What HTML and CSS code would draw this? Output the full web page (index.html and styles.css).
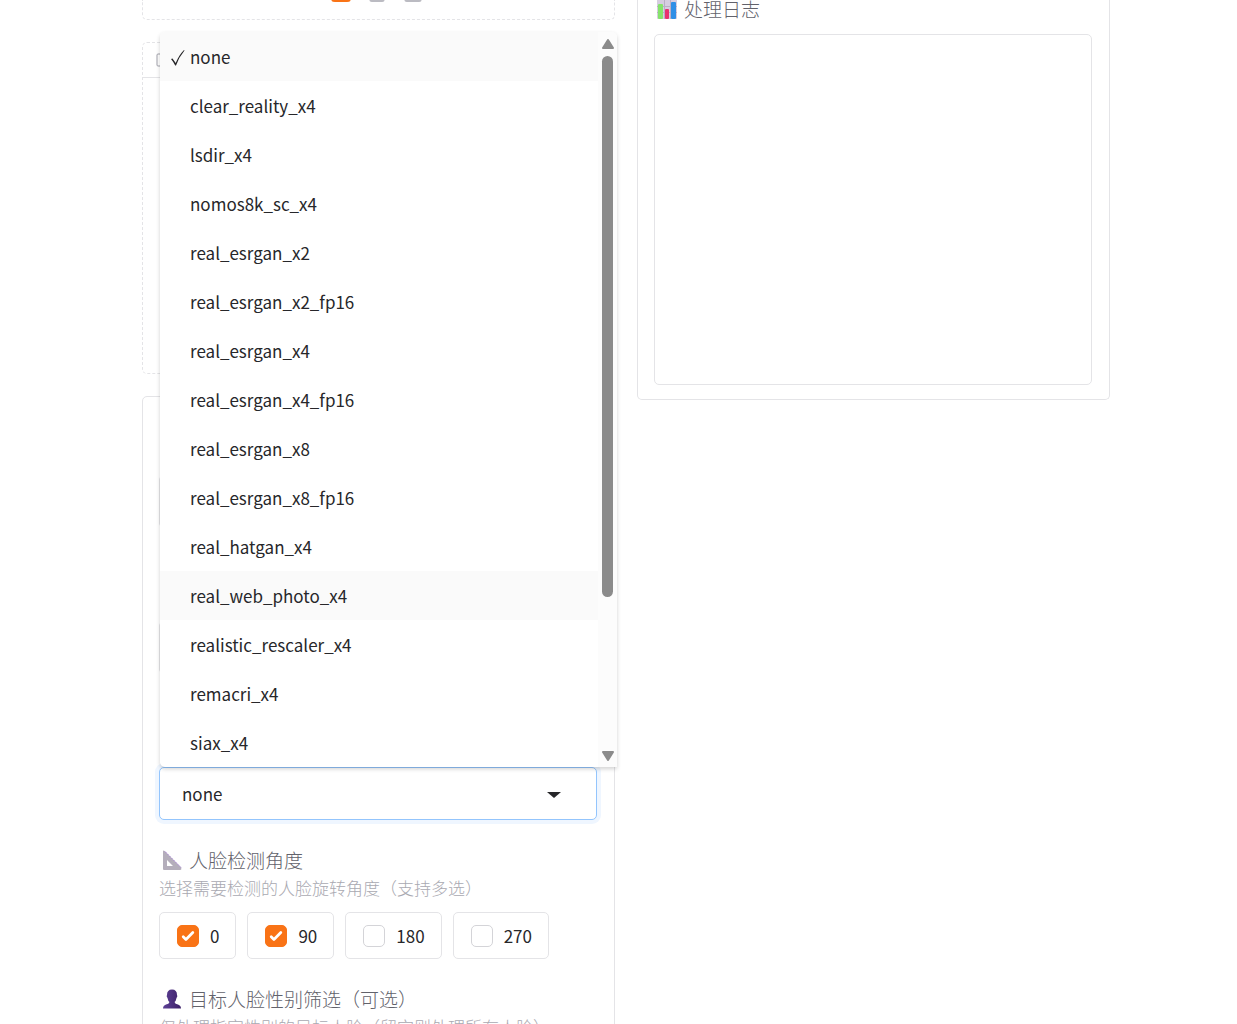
FILE: index.html
```
<!DOCTYPE html>
<html lang="zh-CN">
<head>
    <meta charset="UTF-8">
    <meta name="viewport" content="width=device-width, initial-scale=1.0">
    <title>人脸检测</title>
    <link rel="stylesheet" href="styles.css">
</head>
<body>
    <main class="container">
        <div class="column">
            <section class="upload">
                <svg class="source active" viewBox="0 0 20 2"><path d="M1 0Q2 1 4 1H16Q18 1 19 0"/></svg>
                <svg class="source" viewBox="0 0 20 2"><path d="M3 0Q4 1 5 1H15Q16 1 17 0"/></svg>
                <svg class="source" viewBox="0 0 20 2"><path d="M2 0Q3 1 4 1H16Q17 1 18 0"/></svg>
            </section>
            <section class="preview">
                <div class="preview-head">
                    <svg width="14" height="14" viewBox="0 0 14 14"><rect x="1" y="1" width="12" height="12" rx="1"/></svg>
                </div>
            </section>
            <section class="card options">
                <div class="field hidden-label">
                    <select class="dropdown" aria-label="模型"></select>
                </div>
                <div class="field hidden-label">
                    <select class="dropdown" aria-label="增强"></select>
                </div>
                <div class="field hidden-label">
                    <div class="dropdown-wrap">
                        <select class="dropdown focused" aria-label="超分">
                            <option>none</option>
                        </select>
                        <svg class="caret" viewBox="0 0 14 6"><path d="M0 0h14L7 6z"/></svg>
                        <div class="menu">
                            <ul class="menu-list" role="listbox">
                                <li class="item selected" role="option" aria-selected="true"><svg class="tick" viewBox="0 0 14 16"><path d="M0 9L1.500 8.500L4.700 13Q8 5 13 0L13.500 .5Q8 7 5 15.500H4.200Q2.500 12 0 9z"/></svg>none</li>
                                <li class="item" role="option">clear_reality_x4</li>
                                <li class="item" role="option">lsdir_x4</li>
                                <li class="item" role="option">nomos8k_sc_x4</li>
                                <li class="item" role="option">real_esrgan_x2</li>
                                <li class="item" role="option">real_esrgan_x2_fp16</li>
                                <li class="item" role="option">real_esrgan_x4</li>
                                <li class="item" role="option">real_esrgan_x4_fp16</li>
                                <li class="item" role="option">real_esrgan_x8</li>
                                <li class="item" role="option">real_esrgan_x8_fp16</li>
                                <li class="item" role="option">real_hatgan_x4</li>
                                <li class="item hover" role="option">real_web_photo_x4</li>
                                <li class="item" role="option">realistic_rescaler_x4</li>
                                <li class="item" role="option">remacri_x4</li>
                                <li class="item" role="option">siax_x4</li>
                            </ul>
                            <div class="scrollbar">
                                <svg class="arrow" viewBox="0 0 14 10"><path d="M7 1L12 9H2z"/></svg>
                                <div class="track"><div class="thumb"></div></div>
                                <svg class="arrow" viewBox="0 0 14 10"><path d="M7 9L2 1H12z"/></svg>
                            </div>
                        </div>
                    </div>
                </div>
                <div class="field">
                    <h2 class="title">
                        <svg class="icon" viewBox="0 0 20 20">
                            <path fill="#b4aebb" fill-rule="evenodd" d="M1 1.500Q1 0 2.500 1L19 17.500Q20 20 18 20H2Q1 20 1 19zM5 10V16H11z"/>
                            <path fill="none" stroke="#a682d0" stroke-dasharray="2 1" d="M3 1.500L19 17.500"/>
                        </svg>
                        人脸检测角度
                    </h2>
                    <p class="info">选择需要检测的人脸旋转角度（支持多选）</p>
                    <div class="choices">
                        <label class="choice"><input type="checkbox" checked>0</label>
                        <label class="choice"><input type="checkbox" checked>90</label>
                        <label class="choice"><input type="checkbox">180</label>
                        <label class="choice"><input type="checkbox">270</label>
                    </div>
                </div>
                <div class="field">
                    <h2 class="title">
                        <svg class="icon" viewBox="0 0 20 20">
                            <defs>
                                <linearGradient id="bust" x2="1">
                                    <stop offset="0" stop-color="#5d4196"/>
                                    <stop offset="1" stop-color="#3d2068"/>
                                </linearGradient>
                            </defs>
                            <path fill="url(#bust)" d="M10 .5Q15 .5 15 6Q16 7 14.500 9Q14 12 12.500 13Q13 15 16 15.500Q19 16.500 19 19.500H1Q1 16.500 4 15.500Q7 15 7.500 13Q6 12 5.500 9Q4 7 5 6Q5 .5 10 .5z"/>
                        </svg>
                        目标人脸性别筛选（可选）
                    </h2>
                    <p class="info">仅处理指定性别的目标人脸（留空则处理所有人脸）</p>
                </div>
            </section>
        </div>
        <div class="column">
            <section class="card log">
                <label class="title" for="log">
                    <svg class="icon" viewBox="0 0 20 20">
                        <rect width="20" height="20" rx="1" fill="#d6cde0"/>
                        <path stroke="#b9aec6" fill="none" d="M0 7.500H20M0 13.500H20M7.500 0V20M13.500 0V20"/>
                        <rect x="1" y="5" width="5" height="15" rx="1" fill="#86e36c"/>
                        <rect x="8" y="10" width="4" height="10" rx="1" fill="#e8316f"/>
                        <rect x="14" y="3" width="5" height="17" rx="1" fill="#2f8fe6"/>
                    </svg>
                    处理日志
                </label>
                <textarea id="log" readonly></textarea>
            </section>
        </div>
    </main>
</body>
</html>
```
FILE: styles.css
```
* {
    box-sizing: border-box;
}

body {
    margin: 0;
    height: 100vh;
    overflow: hidden;
    background: #fff;
    color: #27272a;
    font-family: 'Noto Sans CJK SC', sans-serif;
    font-size: 17px;
}

.container {
    display: grid;
    grid-template-columns: 1fr 1fr;
    align-items: start;
    gap: 22px;
    padding: 0 127px 0 142px;
}

.column {
    display: flex;
    flex-direction: column;
    gap: 22px;
    min-width: 0;
}

.upload {
    display: flex;
    justify-content: center;
    gap: 16px;
    height: 20px;
    padding-right: 3px;
    border: 1px dashed #e4e4e7;
    border-top: none;
    border-radius: 0 0 5px 5px;
}

.source {
    width: 20px;
    height: 2px;
    fill: none;
    stroke: #bbbbc2;
    stroke-width: 2;
}

.source.active {
    stroke: #f97316;
}

.preview {
    height: 332px;
    border: 1px dashed #e4e4e7;
    border-radius: 5px;
}

.preview-head {
    display: flex;
    align-items: center;
    height: 35px;
    padding-left: 13px;
    border-bottom: 1px solid #e4e4e7;
    fill: none;
    stroke: #a1a1aa;
}

.card {
    border: 1px solid #e4e4e7;
    border-radius: 5px;
}

.options {
    display: flex;
    flex-direction: column;
    gap: 26px;
    padding: 11px 17px 16px 16px;
}

.hidden-label {
    padding-top: 67px;
}

.dropdown {
    display: block;
    appearance: none;
    width: 100%;
    height: 53px;
    padding: 0 22px;
    border: 1px solid #e4e4e7;
    border-radius: 5px;
    background: #fff;
    color: #27272a;
    font: inherit;
}

.dropdown.focused {
    border-color: #93c5fd;
    box-shadow: 0 0 0 4px #eff6ff;
}

.dropdown-wrap {
    position: relative;
}

.caret {
    position: absolute;
    top: 25px;
    right: 36px;
    width: 14px;
    height: 6px;
    fill: #27272a;
}

.menu {
    position: absolute;
    bottom: 100%;
    left: 1px;
    right: -20px;
    display: flex;
    overflow: hidden;
    border-radius: 5px 5px 0 5px;
    background: #fff;
    box-shadow: 0 2px 4px rgba(0, 0, 0, 0.18);
}

.menu-list {
    flex: 1;
    margin: 0;
    padding: 0;
    list-style: none;
}

.item {
    position: relative;
    height: 49px;
    padding-left: 30px;
    line-height: 49px;
}

.item.selected,
.item.hover {
    background: #fafafa;
}

.tick {
    position: absolute;
    top: 18px;
    left: 11px;
    width: 14px;
    height: 16px;
    fill: #27272a;
}

.scrollbar {
    display: flex;
    flex-direction: column;
    align-items: center;
    gap: 7px;
    width: 19px;
    padding: 7px 0 6px;
    background: #fcfcfc;
}

.arrow {
    width: 14px;
    height: 10px;
    fill: #8b8b8b;
    stroke: #8b8b8b;
    stroke-width: 2;
    stroke-linejoin: round;
}

.track {
    flex: 1;
}

.thumb {
    width: 11px;
    height: 541px;
    border-radius: 6px;
    background: #8b8b8b;
}

.title {
    display: flex;
    align-items: center;
    gap: 7px;
    margin: 0;
    padding-left: 3px;
    color: #62626b;
    font-size: 19px;
    font-weight: 300;
    line-height: 28px;
}

.icon {
    width: 20px;
    height: 20px;
}

.info {
    margin: 0 0 10px;
    color: #a9a9b1;
    font-size: 17px;
    font-weight: 300;
    line-height: 28px;
}

.choices {
    display: flex;
    flex-wrap: wrap;
    gap: 11px;
}

.choice {
    display: flex;
    align-items: center;
    gap: 11px;
    height: 47px;
    padding: 0 16px 0 17px;
    border: 1px solid #e4e4e7;
    border-radius: 5px;
}

.choice input {
    appearance: none;
    width: 22px;
    height: 22px;
    margin: 0;
    border: 1px solid #d4d4d8;
    border-radius: 5px;
}

.choice input:checked {
    border-color: #f97316;
    background: #f97316 url("data:image/svg+xml,%3Csvg viewBox='0 0 16 16' fill='white' xmlns='http://www.w3.org/2000/svg'%3E%3Cpath d='M12.207 4.793a1 1 0 010 1.414l-5 5a1 1 0 01-1.414 0l-2-2a1 1 0 011.414-1.414L6.500 9.086l4.293-4.293a1 1 0 011.414 0z'/%3E%3C/svg%3E") center / 22px;
}

.log {
    padding: 0 17px 14px 16px;
}

.log .title {
    height: 34px;
    padding-bottom: 16px;
}

.log textarea {
    display: block;
    width: 100%;
    height: 351px;
    border: 1px solid #e4e4e7;
    border-radius: 5px;
    resize: none;
}

.log.card {
    border-top: none;
    border-radius: 0 0 5px 5px;
}
```
